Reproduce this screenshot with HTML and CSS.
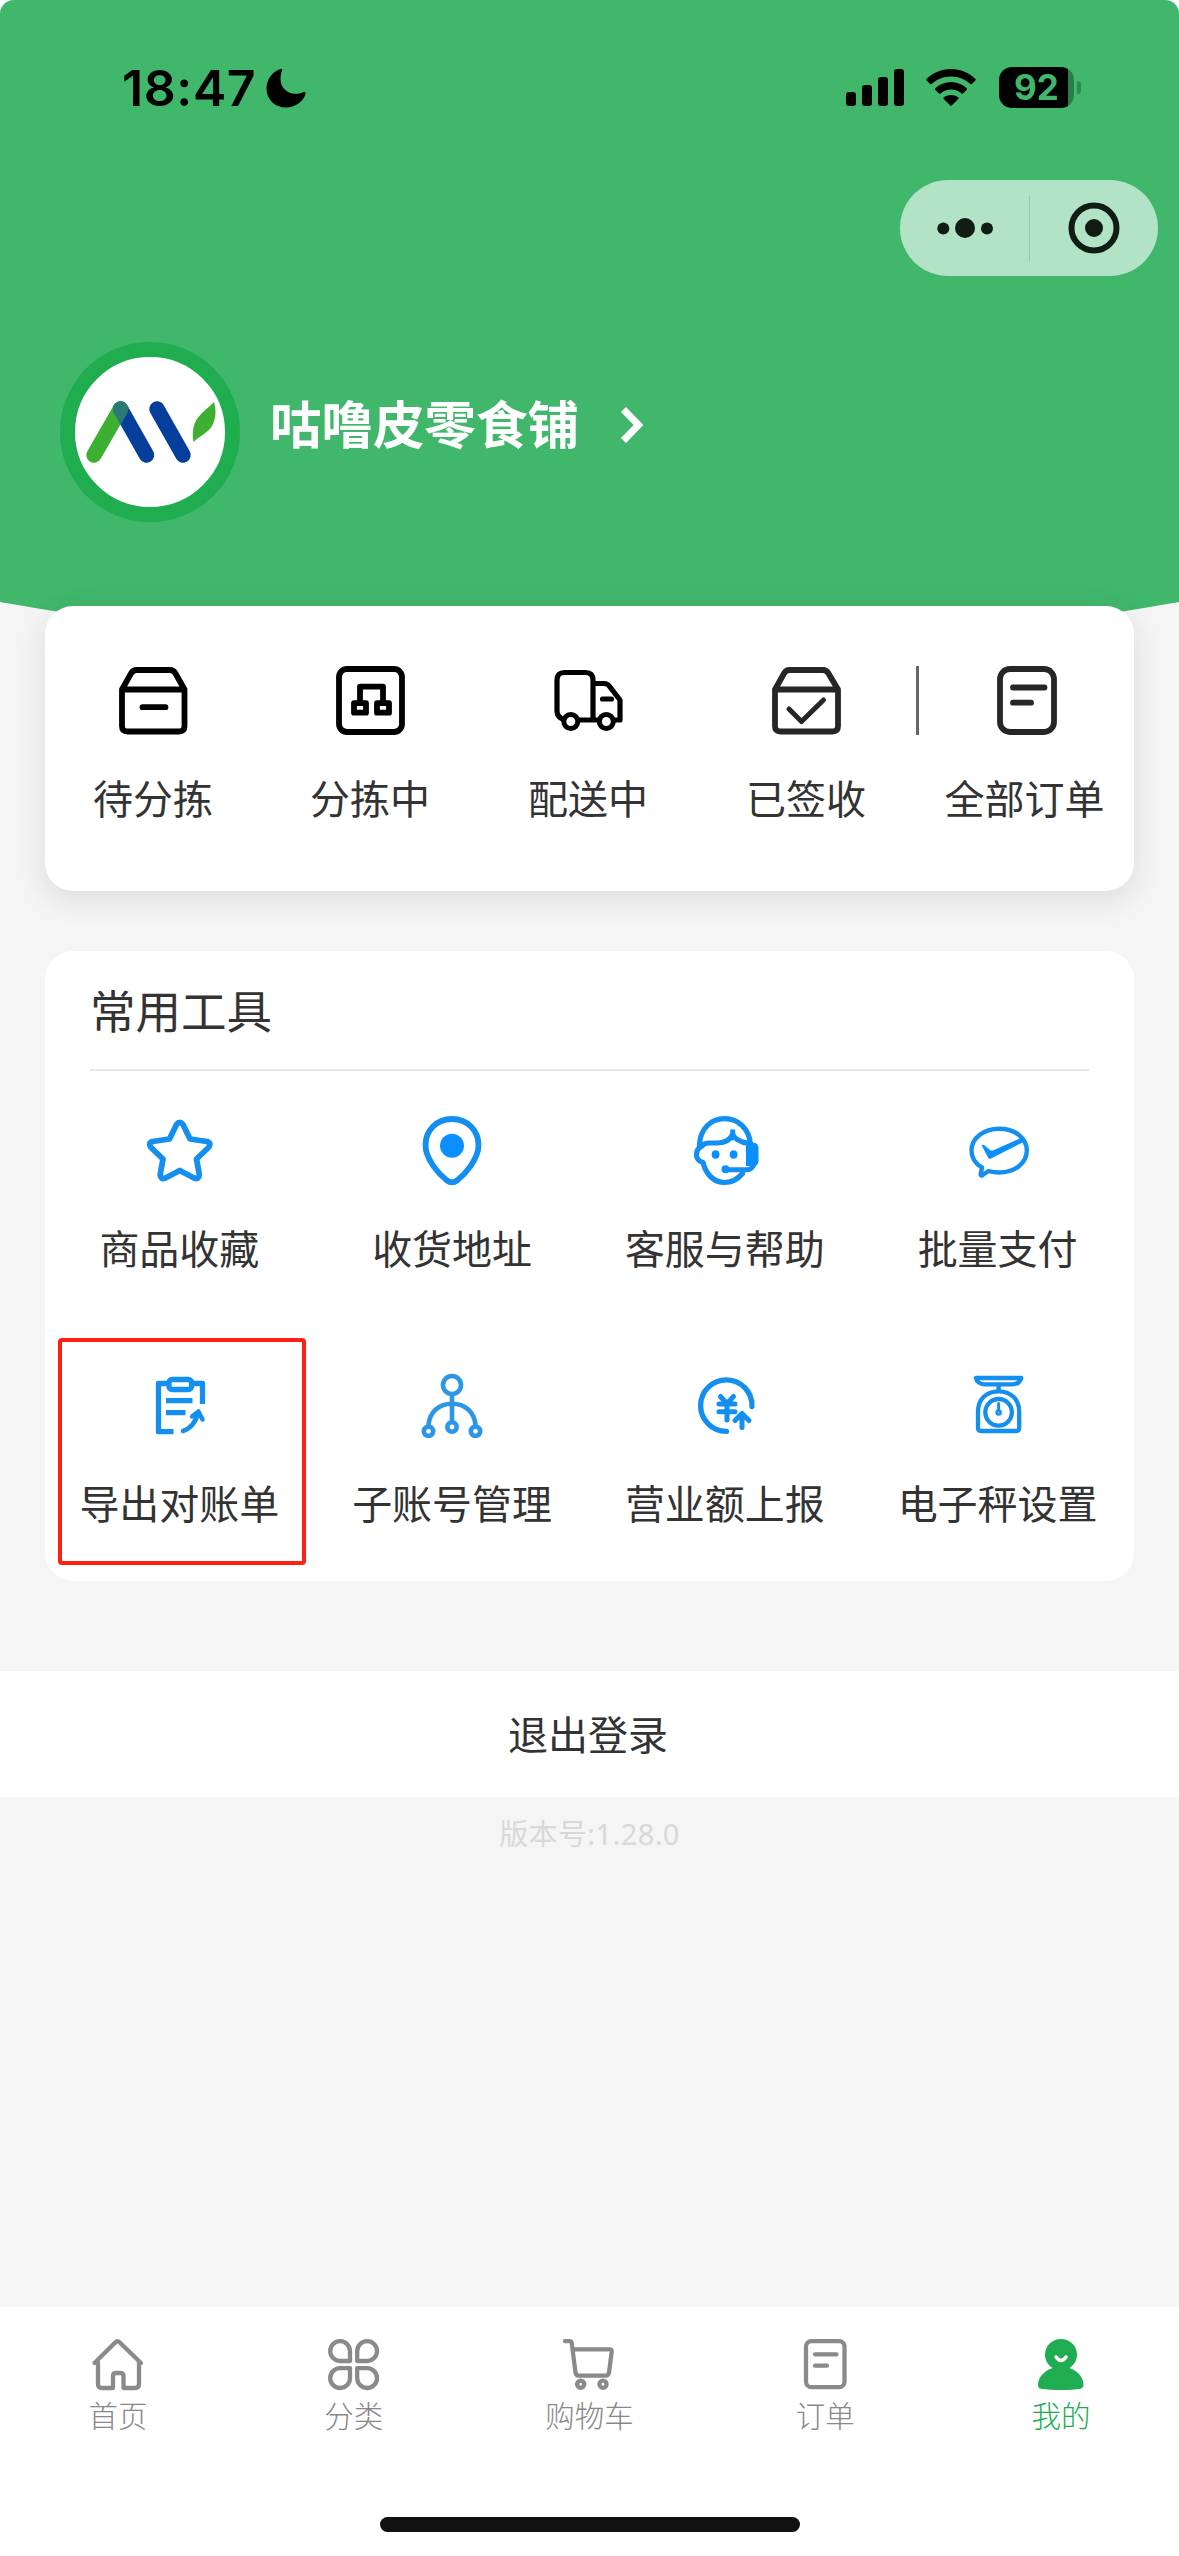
FILE: index.html
```html
<!DOCTYPE html>
<html lang="zh-CN">
<head>
<meta charset="utf-8">
<title>我的</title>
<link rel="stylesheet" href="styles.css">
</head>
<body>
<div class="screen">
  <header class="hero">
    <div class="status">
      <div class="status-left">
        <span class="clock">18:47</span>
        <svg class="moon" viewBox="0 0 40 40"><path d="M15 1C8 2.500 0.500 10 0.500 20.500C0.500 31.500 9 39.500 20 39.500C29 39.500 37 34 39.500 26C40 24 38.500 23.500 37 24.200C34.500 25.200 32 25.800 29.500 25.800C21 25.800 14.500 19.500 14.500 11C14.500 8 15 5 16 2.500C16.400 1.300 16 0.800 15 1Z"/></svg>
      </div>
      <div class="status-right">
        <svg class="signal" viewBox="0 0 58 37"><rect x="0" y="23" width="10" height="14" rx="3"/><rect x="16" y="16" width="10" height="21" rx="3"/><rect x="32" y="8" width="10" height="29" rx="3"/><rect x="48" y="0" width="10" height="37" rx="3"/></svg>
        <svg class="wifi" viewBox="0 0 50 37"><path d="M25 0C34.500 0 43 3.800 49.500 10Q50 10.700 49.400 11.400L45.800 15Q45 15.600 44.300 15C39 10.200 32.500 7.500 25 7.500C17.500 7.500 11 10.200 5.700 15Q5 15.600 4.200 15L0.600 11.400Q0 10.700 0.500 10C7 3.800 15.500 0 25 0Z"/><path d="M25 13C31 13 36.500 15.300 40.800 19.200Q41.400 20 40.800 20.700L37 24.500Q36.300 25 35.600 24.500C32.600 22 29 20.500 25 20.500C21 20.500 17.400 22 14.400 24.500Q13.700 25 13 24.500L9.200 20.700Q8.600 20 9.200 19.200C13.500 15.300 19 13 25 13Z"/><path d="M25 26C28 26 30.500 27 32.400 28.600Q32.900 29.200 32.300 29.900L25.700 36.600Q25 37.200 24.300 36.600L17.700 29.900Q17.100 29.200 17.600 28.600C19.500 27 22 26 25 26Z"/></svg>
        <div class="battery"><span class="battery-level">92</span></div>
      </div>
    </div>
    <div class="capsule">
      <svg class="dots" viewBox="0 0 56 20"><circle cx="6.300" cy="10.500" r="6"/><circle cx="28" cy="10" r="10"/><circle cx="50" cy="10.500" r="6"/></svg>
      <i class="capsule-line"></i>
      <svg class="target" viewBox="0 0 52 52"><circle cx="26" cy="26" r="22.500" fill="none" stroke="#0f1d14" stroke-width="6"/><circle cx="26" cy="26" r="9"/></svg>
    </div>
    <div class="profile">
      <div class="avatar">
        <svg viewBox="0 0 150 150"><g stroke-width="15.500" stroke-linecap="round"><path d="M45.500 52L71.500 98M82 52L108 98" stroke="#053f9b"/><path d="M19 98L45.500 52" stroke="#3db031"/></g><path d="M37.800 52A7.700 7.700 0 0 1 52.300 48.500L54 51.500L45.600 68L38.500 55.500Z" fill="#2b7a79"/><path d="M139 45C141 52 141.500 61 137 69C133 76 124 79 118.500 85C117 76 118 67 123 60.500C127.500 54.500 134 50 139 45Z" fill="#3db031"/></svg>
      </div>
      <span class="shop">咕噜皮零食铺</span>
      <svg class="chevron" viewBox="0 0 24 38"><path d="M3.500 3.500L18.500 19L3.500 34.500" fill="none" stroke="#fff" stroke-width="7"/></svg>
    </div>
  </header>

  <main>
    <section class="card orders">
      <a class="cell"><svg class="icon black" viewBox="0 0 72 72"><path d="M5 25.500L14 9.500Q16 6 19.500 6H53Q56.500 6 58.500 9.500L67.500 25.500V62Q67.500 67.500 62 67.500H10.500Q5 67.500 5 62ZM5 25.500H67.500M25.500 43.200H48.500"/></svg><span>待分拣</span></a>
      <a class="cell"><svg class="icon black" viewBox="0 0 72 72"><rect x="5" y="5" width="63" height="63" rx="8"/><path d="M26 38V22.700H49V38M20 39.200H32V48.700H20ZM43 39.200H55V48.700H43Z"/></svg><span>分拣中</span></a>
      <a class="cell"><svg class="icon black" viewBox="0 0 72 72"><path d="M11.500 55.500Q5 53 5 47V16Q5 8.500 12.500 8.500H33.500Q41 8.500 41 16V56M26.500 56H46.500M41 19.500H52Q56 19.500 58 23L68 36V56H62M50.500 35H59.500" stroke-width="5.200"/><g stroke-width="5"><circle cx="18.800" cy="57.500" r="7"/><circle cx="54.300" cy="57.500" r="7"/></g></svg><span>配送中</span></a>
      <a class="cell"><svg class="icon dark" viewBox="0 0 72 72"><path d="M5 25.500L14 9.500Q16 6 19.500 6H53Q56.500 6 58.500 9.500L68 25.500V62Q68 67.500 62.500 67.500H10.500Q5 67.500 5 62ZM5 25.500H68"/><path d="M19 45L31.500 57.500L53.500 36" stroke-width="5"/></svg><span>已签收</span></a>
      <a class="cell all"><svg class="icon dark" viewBox="-2 0 72 72"><rect x="9" y="5" width="54" height="63" rx="10"/><path d="M22 23.500H53.500M22 38.700H40"/></svg><span>全部订单</span></a>
    </section>

    <section class="card tools">
      <h2>常用工具</h2>
      <div class="grid">
        <a class="cell"><svg class="icon blue" viewBox="0 0 72 72"><path d="M33.500 9.500Q36.700 5.500 40 9.500L47 24L64 26.500Q69 28.500 65.500 32.500L53.500 44L56.300 59.500Q56 65 51 63L36.700 55.500L22.500 63Q17.500 65 17.200 59.500L20 44L8 32.500Q4.500 28.500 9.500 26.500L26.500 24Z"/></svg><span>商品收藏</span></a>
        <a class="cell"><svg class="icon blue" viewBox="0 0 72 72"><path d="M36 4C20 4 9.500 16 9.500 30C9.500 45 24 60 31 65.500Q36 69 41 65.500C48 60 62.500 45 62.500 30C62.500 16 52 4 36 4Z"/><circle class="solid" cx="36" cy="30.700" r="12"/></svg><span>收货地址</span></a>
        <a class="cell"><svg class="icon blue" viewBox="0 0 72 72"><path d="M10.500 32V29C11.500 14 21.500 3.700 35.600 3.700C49.500 3.700 60 14 61.500 29M13 31Q15 28 20 28H29Q40 27.500 43.500 19.500Q47 26.500 60 28.500M11.500 32Q7.500 34.500 7.500 40Q7.500 45.500 14 47.500C17 59.500 25 67.500 35.600 67.500Q46 67.500 53.500 58.500" stroke-width="5.200"/><path d="M37 54.800H58Q63.500 54.800 66 47" stroke-width="5"/><path class="solid" d="M41.200 14.500H46.200V22L43.700 26L41.200 22ZM57 27.500H64Q69.500 28 69.500 33V46Q69.500 51 64 51H57Z"/><ellipse class="solid" cx="26.600" cy="39.500" rx="3.900" ry="4.300"/><ellipse class="solid" cx="44.600" cy="39.500" rx="3.900" ry="4.300"/><circle class="solid" cx="36.500" cy="54.300" r="4"/></svg><span>客服与帮助</span></a>
        <a class="cell"><svg class="icon blue" viewBox="0 0 72 72"><path d="M20 52.500C13 48.500 9.500 42.500 9.500 35.500C9.500 23 21.500 13.700 37.200 13.700C53 13.700 64.800 23 64.800 35.500C64.800 48 53 57.500 37.200 57.500Q31.500 57.500 26.500 56L20 60.500Q18.500 61 18.700 59Z" stroke-width="4.400"/><path class="solid" d="M20 31Q20 29 22 30L28 35Q29.500 36 32 35L60 22.500L63.500 26L29 43.500Q27 44.500 26 42.500Z"/></svg><span>批量支付</span></a>
        <a class="cell marked"><svg class="icon blue" viewBox="0 0 72 72"><g stroke-width="5.300"><rect x="26" y="9.500" width="22.500" height="10" rx="3"/><path stroke-linecap="butt" d="M25 13.500H15.500V61.700H30.500M49 13.500H59.500V34M23 30.700H49.500M23 42.700H42.500" /><path d="M40 61Q51 57.500 55.500 42.500M49 46.500L55.500 41.500L59.500 49.500" stroke-width="4.500"/></g></svg><span>导出对账单</span></a>
        <a class="cell"><svg class="icon pale" viewBox="0 0 72 72"><g stroke-width="4.600"><circle cx="36" cy="15" r="9"/><path d="M36 25V51M12.500 56V55C13.500 42 23 33.700 36 33.700C49 33.700 58.500 42 59.500 55V56"/><circle cx="12.500" cy="61.300" r="4.700"/><circle cx="36" cy="57" r="4.700"/><circle cx="59.500" cy="61.300" r="4.700"/></g></svg><span>子账号管理</span></a>
        <a class="cell"><svg class="icon blue" viewBox="0 0 72 72"><g stroke-width="5.300"><path d="M63 36.500A25.700 25.700 0 1 0 37.500 61.300"/><path d="M31.500 26.500L38 33.700L44.500 26.500M30 34H46M30 41.700H46M38 34V50M53 45V57.500M46 50.500L53 43.500L60 50.500" stroke-width="5"/></g></svg><span>营业额上报</span></a>
        <a class="cell"><svg class="icon blue" viewBox="0 0 72 72"><g stroke-width="4.300"><path d="M13.800 8H59.300C58 12 55 14.300 50.500 14.300H22.500C18 14.300 15 12 13.800 8ZM36.600 15V20M16 42C16 29 24.500 21.300 36.600 21.300C48.700 21.300 57.200 29 57.200 42V58Q57.200 61 54.200 61H19Q16 61 16 58Z"/><circle cx="36.600" cy="42.300" r="13.300"/><path d="M36.600 33.500V41" stroke-width="3"/><circle cx="36.600" cy="42.500" r="2" stroke-width="2.500"/></g></svg><span>电子秤设置</span></a>
      </div>
    </section>

    <button class="logout">退出登录</button>
    <p class="version">版本号:1.28.0</p>
  </main>

  <nav class="tabs">
    <a class="tab"><svg viewBox="0 0 58 58"><path d="M5.500 27L26.500 6.200Q28.500 4 30.500 6.200L52 27M9 26V48Q9 52 13 52H24V40Q24 37 27 37H31.500Q34.500 37 34.500 40V52H46Q50 52 50 48V26"/></svg><span>首页</span></a>
    <a class="tab"><svg viewBox="0 0 58 58"><path d="M25 25V15.200A9.900 9.900 0 1 0 15.100 25ZM32.200 25V15.200A9.900 9.900 0 1 1 42.100 25ZM25 32.200V42A9.900 9.900 0 1 1 15.100 32.200ZM32.200 32.200V42A9.900 9.900 0 1 0 42.100 32.200Z"/></svg><span>分类</span></a>
    <a class="tab"><svg viewBox="0 0 58 58"><path d="M5 5.200H9.500Q11.500 5.200 11.800 7.500L15.500 36.700Q16 39.700 18.500 39.700H45.500Q48.500 39.700 49 36.700L51.700 15.500Q51.900 13.300 49.500 13.300H13"/><circle cx="20.700" cy="48.300" r="3.600"/><circle cx="43" cy="48.300" r="3.600"/></svg><span>购物车</span></a>
    <a class="tab"><svg viewBox="0 0 58 58"><rect x="10" y="5.200" width="38.500" height="46" rx="5.500"/><path d="M19 18.300H40.500M19 29.700H31"/></svg><span>订单</span></a>
    <a class="tab active"><svg viewBox="0 0 58 58"><path class="fill" d="M29 3C20 3 13 10 13 18.500C13 24.500 16 29 20.500 32C12 35 6 41.500 6 49Q6 52 9 52.700C20 54.400 38 54.400 49 52.700Q51.500 52 51.500 49C51.500 41.500 46 35 37.500 32C42 29 45 24.500 45 18.500C45 10 38 3 29 3Z"/><path class="smile" d="M24 21Q29 28 34 21"/></svg><span>我的</span></a>
    <i class="home-bar"></i>
  </nav>
</div>
</body>
</html>
```
FILE: styles.css
```css
*,
*::before,
*::after { box-sizing: border-box; }

body {
  margin: 0;
  background: #fff;
  color: #333;
  font-family: "Noto Sans CJK SC", sans-serif;
}

.screen {
  display: flex;
  flex-direction: column;
  width: 1179px;
  height: 2556px;
  overflow: hidden;
  border-radius: 14px 14px 0 0;
  background: #f5f5f5;
}

svg { display: block; flex: none; }

/* Green header with a gently curved bottom edge */
.hero {
  flex: none;
  display: flex;
  flex-direction: column;
  height: 653px;
  background: #40b76b;
  clip-path: ellipse(1521px 653px at 50% 0);
}

.status {
  display: flex;
  justify-content: space-between;
  align-items: center;
  height: 180px;
  padding: 0 98px 5px 122px;
}

.status-left,
.status-right { display: flex; align-items: center; }

.clock {
  width: 144px;
  color: #000;
  font: 600 50px/60px Inter, sans-serif;
  letter-spacing: 0.600px;
  white-space: nowrap;
}

.moon { width: 40px; height: 40px; }
.signal { width: 58px; height: 37px; margin-right: 22px; }
.wifi { width: 50px; height: 37px; margin-right: 23px; }

.battery {
  display: flex;
  position: relative;
  width: 75px;
  height: 41px;
  margin-right: 7px;
  border-radius: 13px;
  background: linear-gradient(90deg, #000 69px, #2a7d48 69px);
}

.battery::after {
  content: "";
  position: absolute;
  left: 78px;
  top: 14px;
  width: 4px;
  height: 13px;
  border-radius: 0 4px 4px 0;
  background: #2a8a4c;
}

.battery-level {
  width: 75px;
  color: #40b76b;
  font: 700 35px/41px Inter, sans-serif;
  text-align: center;
}

.capsule {
  display: flex;
  align-items: center;
  align-self: flex-end;
  width: 258px;
  height: 96px;
  margin-right: 21px;
  padding-left: 37px;
  border-radius: 48px;
  background: #b3e3c6;
  fill: #111c15;
}

.dots { width: 56px; height: 20px; }
.capsule-line { width: 1px; height: 65px; margin: 0 38px 0 36px; background: #92cba8; }
.target { width: 52px; height: 52px; }

.profile {
  display: flex;
  align-items: center;
  height: 180px;
  margin-top: 66px;
  padding-left: 60px;
}

.avatar {
  width: 180px;
  height: 180px;
  border: 15px solid #1fad50;
  border-radius: 50%;
  background: #fff;
}

.avatar svg { width: 150px; height: 150px; }

.shop {
  margin: -20px 41px 0 30px;
  color: #fff;
  font-size: 51.500px;
  font-weight: 700;
  line-height: 60px;
}

.chevron { width: 24px; height: 38px; margin-top: -14px; }

main {
  display: flex;
  flex-direction: column;
  flex: 1;
  margin-top: -47px;
  z-index: 1;
}

.card {
  margin: 0 45px;
  border-radius: 28px;
  background: #fff;
}

.orders {
  display: grid;
  grid-template-columns: 216px repeat(3, 218px) 219px;
  height: 285px;
  padding-top: 58px;
  box-shadow: 0 8px 30px rgba(40, 40, 60, 0.12);
}

.cell {
  position: relative;
  display: flex;
  flex-direction: column;
  align-items: center;
  font-size: 40px;
  line-height: 60px;
  white-space: nowrap;
}

.orders .cell { gap: 31px; }

.all::before {
  content: "";
  position: absolute;
  left: 1px;
  top: 2px;
  width: 3px;
  height: 69px;
  background: #666;
}

.icon {
  width: 72px;
  height: 72px;
  fill: none;
  stroke-width: 5.800;
  stroke-linecap: round;
  stroke-linejoin: round;
}

.black { stroke: #000; }
.dark { stroke: #262626; }
.blue { stroke: #148ff0; }
.pale { stroke: #2e96e6; }
.solid { fill: #0a8fff; stroke: none; }

.tools { height: 630px; margin-top: 60px; }

.tools h2 {
  height: 120px;
  margin: 0 45px;
  border-bottom: 2px solid #e6e6e6;
  font-size: 45.500px;
  font-weight: 400;
  line-height: 117px;
}

.grid {
  display: grid;
  grid-template-columns: repeat(4, 1fr);
  grid-auto-rows: 255px;
  margin-left: -2px;
  padding-top: 44px;
}

.grid .cell { gap: 30px; }

/* Highlight frame around the export entry */
.marked::after {
  content: "";
  position: absolute;
  left: 15px;
  top: -32px;
  width: 248px;
  height: 227px;
  border: 4px solid #ff2015;
  border-radius: 4px;
}

.logout {
  height: 126px;
  margin-top: 90px;
  padding: 0 3px 3px 0;
  border: 0;
  background: #fff;
  color: #333;
  font: 400 40px/60px "Noto Sans CJK SC", sans-serif;
}

.version {
  margin: 17px 0 0;
  color: #d8d8d8;
  font: 400 29px/40px "Noto Sans", "Noto Sans CJK SC", sans-serif;
  letter-spacing: 0.400px;
  text-align: center;
}

.tabs {
  display: grid;
  grid-template-columns: repeat(5, 1fr);
  grid-template-rows: 210px auto;
  flex: none;
  height: 249px;
  background: #fff;
}

.tab {
  display: flex;
  flex-direction: column;
  align-items: center;
  padding-top: 29px;
  color: #888;
  font-size: 29.500px;
  font-weight: 300;
  line-height: 40px;
}

.tab svg {
  width: 58px;
  height: 58px;
  fill: none;
  stroke: #8a8a8a;
  stroke-width: 4.300;
  stroke-linecap: round;
  stroke-linejoin: round;
}

.tab .fill { fill: #20ad52; stroke: none; }
.tab .smile { stroke: #fff; stroke-width: 3.500; }
.active { color: #20ad52; }

.home-bar {
  grid-column: 1 / -1;
  justify-self: center;
  width: 420px;
  height: 15px;
  border-radius: 8px;
  background: #111;
}
```
